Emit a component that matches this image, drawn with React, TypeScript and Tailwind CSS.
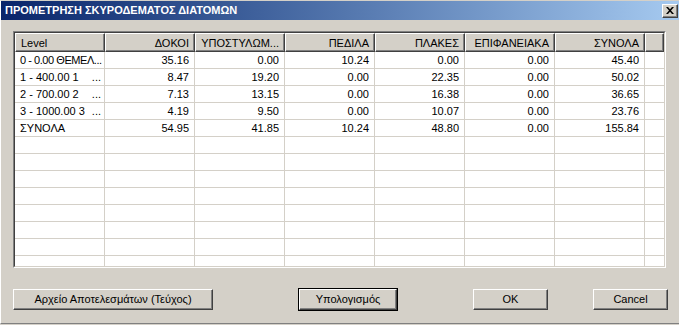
import React from 'react'

const font = "font-['Liberation_Sans','DejaVu_Sans',sans-serif]"

const bevel =
	'border-t border-l border-t-white border-l-white border-r border-b border-r-[#404040] border-b-[#404040] shadow-[inset_-1px_-1px_0_#808080]'

type Row = { level: string; dots?: boolean; tight?: boolean; values: string[] }

const rows: Row[] = [
	{ level: '0 - 0.00 ΘΕΜΕΛ...', tight: true, values: ['35.16', '0.00', '10.24', '0.00', '0.00', '45.40'] },
	{ level: '1 - 400.00 1', dots: true, values: ['8.47', '19.20', '0.00', '22.35', '0.00', '50.02'] },
	{ level: '2 - 700.00 2', dots: true, values: ['7.13', '13.15', '0.00', '16.38', '0.00', '36.65'] },
	{ level: '3 - 1000.00 3', dots: true, values: ['4.19', '9.50', '0.00', '10.07', '0.00', '23.76'] },
	{ level: 'ΣΥΝΟΛΑ', values: ['54.95', '41.85', '10.24', '48.80', '0.00', '155.84'] },
]

const headers = ['ΔΟΚΟΙ', 'ΥΠΟΣΤΥΛΩΜ...', 'ΠΕΔΙΛΑ', 'ΠΛΑΚΕΣ', 'ΕΠΙΦΑΝΕΙΑΚΑ', 'ΣΥΝΟΛΑ']

function Button({ label, width }: { label: string; width: string }) {
	return (
		<div
			className={`${bevel} ${width} h-[21px] bg-[#d4d0c8] flex items-center justify-center text-[11px] text-black whitespace-nowrap`}
		>
			{label}
		</div>
	)
}

export default function App() {
	const empty = Array.from({ length: 8 })

	return (
		<div className={`${font} w-[679px] h-[325px] bg-[#d4d0c8] overflow-hidden`}>
			<div className="h-[324px] border-t border-t-[#d4d0c8] border-l border-l-white border-b border-b-[#808080] flex flex-col">
				{/* title bar */}
				<div className="h-[19px] flex items-center justify-between pl-[4px] pr-[1px] bg-gradient-to-r from-[#0a246a] to-[#a6caf0]">
					<span className="text-[11px] font-bold text-white whitespace-nowrap">
						ΠΡΟΜΕΤΡΗΣΗ ΣΚΥΡΟΔΕΜΑΤΟΣ ΔΙΑΤΟΜΩΝ
					</span>
					<div className={`${bevel} w-[16px] h-[14px] bg-[#d4d0c8] flex items-center justify-center`}>
						<svg width="8" height="7" viewBox="0 0 8 7">
							<path d="M0 0h2l2 2.2L6 0h2L5 3.5 8 7H6L4 4.8 2 7H0l3-3.5z" fill="#000" />
						</svg>
					</div>
				</div>

				{/* list view */}
				<div className="ml-[12px] mt-[11px] w-[653px] h-[237px] border-t border-l border-t-[#808080] border-l-[#808080] border-r border-b border-r-white border-b-white">
					<div className="w-full h-full border-t border-l border-t-[#404040] border-l-[#404040] border-r border-b border-r-[#d4d0c8] border-b-[#d4d0c8] bg-white overflow-hidden flex flex-col">
						<div className="flex h-[19px] shrink-0 bg-[#d4d0c8] text-[11px] leading-none text-black whitespace-nowrap">
							<div className={`${bevel} w-[90px] flex items-center pl-[5px] pt-[1px]`}>Level</div>
							{headers.map((h) => (
								<div key={h} className={`${bevel} w-[90px] flex items-center justify-end pr-[5px] pt-[1px] overflow-hidden`}>
									{h}
								</div>
							))}
							<div className={`${bevel} flex-1`} />
						</div>
						{rows.map((r) => (
							<div key={r.level} className="flex h-[17px] shrink-0 border-b border-b-[#d4d0c8] text-[11px] leading-none text-black whitespace-nowrap">
								<div className="w-[90px] border-r border-r-[#d4d0c8] flex items-center justify-between pl-[5px] pr-[3px]">
									<span className={r.tight ? 'tracking-[-0.45px]' : ''}>{r.level}</span>
									{r.dots && <span>...</span>}
								</div>
								{r.values.map((v, i) => (
									<div key={i} className="w-[90px] border-r border-r-[#d4d0c8] flex items-center justify-end pr-[5px]">
										{v}
									</div>
								))}
							</div>
						))}
						{empty.map((_, k) => (
							<div key={k} className="flex h-[17px] shrink-0 border-b border-b-[#d4d0c8]">
								{Array.from({ length: 7 }).map((__, i) => (
									<div key={i} className="w-[90px] border-r border-r-[#d4d0c8]" />
								))}
							</div>
						))}
					</div>
				</div>

				{/* buttons */}
				<div className="mt-[20px] ml-[12px] flex items-center h-[23px]">
					<Button label="Αρχείο Αποτελεσμάτων (Τεύχος)" width="w-[200px]" />
					<div className="ml-[85px] border border-black">
						<Button label="Υπολογισμός" width="w-[98px]" />
					</div>
					<div className="ml-[75px]">
						<Button label="OK" width="w-[75px]" />
					</div>
					<div className="ml-[45px]">
						<Button label="Cancel" width="w-[75px]" />
					</div>
				</div>
			</div>
		</div>
	)
}
